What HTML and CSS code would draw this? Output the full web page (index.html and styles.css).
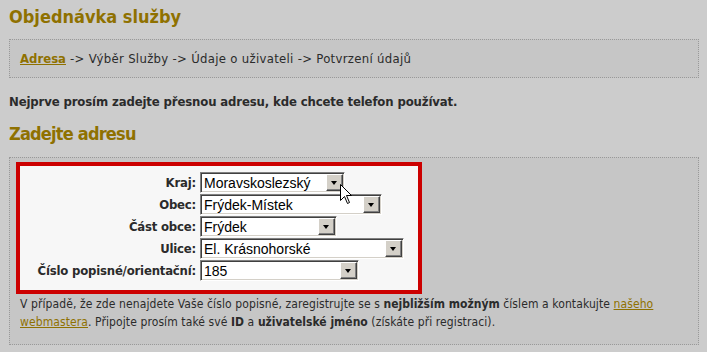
FILE: index.html
```html
<!DOCTYPE html>
<html lang="cs">
<head>
  <meta charset="UTF-8" />
  <title>Objednávka služby</title>
  <link rel="stylesheet" href="styles.css">
</head>
<body>
  <h1>Objednávka služby</h1>

  <div class="box steps">
    <a href="#">Adresa</a> -&gt; Výběr Služby -&gt; Údaje o uživateli -&gt; Potvrzení údajů
  </div>

  <p class="intro">Nejprve prosím zadejte přesnou adresu, kde chcete telefon používat.</p>

  <h2>Zadejte adresu</h2>

  <div class="box">
    <form class="address">
      <label for="kraj">Kraj:</label>
      <div class="combo w-kraj">
        <select id="kraj"><option>Moravskoslezský</option></select>
        <span class="arrow"></span>
        <svg class="cursor" width="13" height="21" viewBox="0 0 13 21">
          <path d="M0.5 0.5 L0.5 16.5 L4.5 12.5 L7.5 19.5 L9.5 18.5 L6.5 11.5 L11.5 11.5 Z" fill="#fff" stroke="#000" stroke-width="1"/>
        </svg>
      </div>

      <label for="obec">Obec:</label>
      <div class="combo w-obec">
        <select id="obec"><option>Frýdek-Místek</option></select>
        <span class="arrow"></span>
      </div>

      <label for="cast">Část obce:</label>
      <div class="combo w-cast">
        <select id="cast"><option>Frýdek</option></select>
        <span class="arrow"></span>
      </div>

      <label for="ulice">Ulice:</label>
      <div class="combo w-ulice">
        <select id="ulice"><option>El. Krásnohorské</option></select>
        <span class="arrow"></span>
      </div>

      <label for="cislo">Číslo popisné/orientační:</label>
      <div class="combo w-cislo">
        <select id="cislo"><option>185</option></select>
        <span class="arrow"></span>
      </div>
    </form>

    <p class="note">
      V případě, že zde nenajdete Vaše číslo popisné, zaregistrujte se s <b>nejbližším možným</b> číslem a kontakujte <a href="#">našeho webmastera</a>. Připojte prosím také své <b>ID</b> a <b>uživatelské jméno</b> (získáte při registraci).
    </p>
  </div>
</body>
</html>
```

FILE: styles.css
```css
body {
  margin: 0;
  padding: 0 8px 0 9px;
  background: #cccccc;
  color: #2b2b2b;
  font-family: "DejaVu Sans Condensed", "DejaVu Sans", sans-serif;
  font-size: 13px;
}

a {
  color: #8f7100;
}

h1, h2 {
  font-size: 18px;
  line-height: 22px;
  color: #8f7100;
}

h1 {
  margin: 6px 0 11px;
}

h2 {
  margin: 0 0 12px;
  letter-spacing: -0.8px;
}

.box {
  background: #c6c6c6;
  border: 1px dotted #999;
}

.steps {
  padding: 10px 10px;
  line-height: 17px;
  letter-spacing: 0.3px;
}

.steps a {
  font-weight: bold;
  letter-spacing: 0;
}

.intro {
  margin: 15px 0 13px;
  font-weight: bold;
  line-height: 17px;
  letter-spacing: -0.13px;
}

.address {
  display: grid;
  grid-template-columns: 176px max-content;
  gap: 1px 4px;
  align-items: center;
  width: 398px;
  margin: 4px 0 0 6px;
  padding: 6px 0 9px;
  background: #f7f7f7;
  border: 4px solid #cc0000;
}

.address label {
  text-align: right;
  font-weight: bold;
  letter-spacing: -0.2px;
}

.combo {
  position: relative;
  height: 21px;
}

.combo select {
  appearance: none;
  -webkit-appearance: none;
  width: 100%;
  height: 21px;
  margin: 0;
  padding: 0 20px 0 3px;
  box-sizing: border-box;
  background: #fff;
  border: 1px solid;
  border-color: #808080 #fff #fff #808080;
  box-shadow: inset 1px 1px 0 #404040, inset -1px -1px 0 #d4d0c8;
  border-radius: 0;
  font-family: "Liberation Sans", Arial, sans-serif;
  font-size: 14px;
  color: #000;
}

.arrow {
  position: absolute;
  top: 2px;
  right: 2px;
  width: 15px;
  height: 15px;
  background: #d4d0c8;
  border: 1px solid;
  border-color: #fff #404040 #404040 #fff;
  box-shadow: inset -1px -1px 0 #808080;
}

.arrow::after {
  content: "";
  position: absolute;
  left: 4px;
  top: 6px;
  border-style: solid;
  border-width: 4px 3.5px 0;
  border-color: #000 transparent transparent;
}

.w-kraj { width: 145px; }
.w-obec { width: 182px; }
.w-cast { width: 137px; }
.w-ulice { width: 204px; }
.w-cislo { width: 159px; }

.cursor {
  position: absolute;
  z-index: 2;
  left: 140px;
  top: 12px;
}

.note {
  margin: 1px 0 0;
  padding: 0 10px 13px 10px;
  font-size: 12px;
  line-height: 18px;
  letter-spacing: 0.1px;
}

.note b {
  letter-spacing: 0;
}
```
